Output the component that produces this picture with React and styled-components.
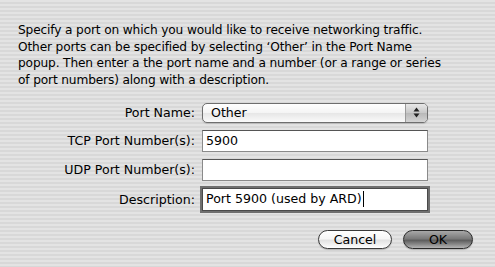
import React from "react";
import styled, { createGlobalStyle } from "styled-components";

const Global = createGlobalStyle`
  html, body { margin: 0; padding: 0; }
  body {
    width: 495px;
    height: 267px;
    overflow: hidden;
    background: repeating-linear-gradient(
      to bottom,
      #e3e3e3 0px, #e3e3e3 2px,
      #d8d8d8 2px, #d8d8d8 4px
    );
    font-family: "DejaVu Sans", "Liberation Sans", sans-serif;
    color: #000;
  }
`;

const Sheet = styled.div`
  box-sizing: border-box;
  width: 495px;
  height: 267px;
  padding: 22px 22px 0 18px;
  display: flex;
  flex-direction: column;
`;

const Intro = styled.p`
  margin: 0;
  font-size: 12.2px;
  line-height: 16.7px;
  letter-spacing: -0.15px;
`;

const Form = styled.div`
  margin-top: 14px;
  display: grid;
  grid-template-columns: 177px 226px;
  column-gap: 7px;
  row-gap: 7px;
  align-items: center;
`;

const Label = styled.label`
  text-align: right;
  font-size: 12.6px;
  white-space: nowrap;
`;

const Popup = styled.div`
  box-sizing: border-box;
  height: 20px;
  border: 1px solid #6e6e6e;
  border-radius: 5px;
  background: linear-gradient(to bottom, #ffffff 0%, #f4f4f4 50%, #e6e6e6 51%, #fafafa 100%);
  display: flex;
  align-items: stretch;
  overflow: hidden;
  box-shadow: 0 1px 1px rgba(0,0,0,0.15);
`;

const PopupText = styled.span`
  flex: 1;
  padding-left: 8px;
  font-size: 12.6px;
  line-height: 18px;
`;

const Stepper = styled.span`
  width: 21px;
  border-left: 1px solid #9a9a9a;
  background: linear-gradient(to bottom, #e8e8e8 0%, #c8c8c8 50%, #b8b8b8 51%, #d4d4d4 100%);
  display: flex;
  align-items: center;
  justify-content: center;
`;

const Field = styled.div`
  box-sizing: border-box;
  height: ${p => (p.$focus ? 23 : 22)}px;
  background: #fff;
  border: 1px solid #8a8a8a;
  border-top-color: #555;
  font-size: 12.6px;
  line-height: 20px;
  padding-left: 3px;
  display: flex;
  align-items: center;
  ${p => p.$focus && `
    outline: 2px solid #6f6f6f;
    outline-offset: 0px;
    border-color: #4a4a4a;
  `}
`;

const Caret = styled.span`
  display: inline-block;
  width: 1px;
  height: 16px;
  background: #000;
  margin-left: 1px;
`;

const Buttons = styled.div`
  margin-top: 19px;
  display: flex;
  justify-content: flex-end;
  gap: 11px;
`;

const Button = styled.button`
  box-sizing: border-box;
  height: 19px;
  width: ${p => p.$w}px;
  border-radius: 10px;
  border: 1px solid ${p => (p.$default ? "#2a2a2a" : "#3a3a3a")};
  font-family: "DejaVu Sans", "Liberation Sans", sans-serif;
  font-size: 12.6px;
  line-height: 17px;
  padding: 0;
  color: #000;
  background: ${p =>
    p.$default
      ? "linear-gradient(to bottom, #a8a8a8 0%, #7a7a7a 45%, #5e5e5e 55%, #8c8c8c 80%, #b4b4b4 100%)"
      : "linear-gradient(to bottom, #ffffff 0%, #f6f6f6 45%, #e2e2e2 55%, #f4f4f4 85%, #ffffff 100%)"};
  box-shadow: 0 1px 1px rgba(0,0,0,0.2);
`;

export default function App() {
  return (
    <>
      <Global />
      <Sheet>
        <Intro>
          Specify a port on which you would like to receive networking traffic.
          <br />
          Other ports can be specified by selecting ‘Other’ in the Port Name
          <br />
          popup. Then enter a the port name and a number (or a range or series
          <br />
          of port numbers) along with a description.
        </Intro>
        <Form>
          <Label>Port Name:</Label>
          <Popup>
            <PopupText>Other</PopupText>
            <Stepper>
              <svg width="7" height="11" viewBox="0 0 7 11">
                <path d="M3.5 0.5 L6.5 4.5 L0.5 4.5 Z" fill="#222" />
                <path d="M3.5 10.5 L6.5 6.5 L0.5 6.5 Z" fill="#222" />
              </svg>
            </Stepper>
          </Popup>
          <Label>TCP Port Number(s):</Label>
          <Field>5900</Field>
          <Label>UDP Port Number(s):</Label>
          <Field />
          <Label>Description:</Label>
          <Field $focus>
            Port 5900 (used by ARD)
            <Caret />
          </Field>
        </Form>
        <Buttons>
          <Button $w={74}>Cancel</Button>
          <Button $w={70} $default>OK</Button>
        </Buttons>
      </Sheet>
    </>
  );
}
